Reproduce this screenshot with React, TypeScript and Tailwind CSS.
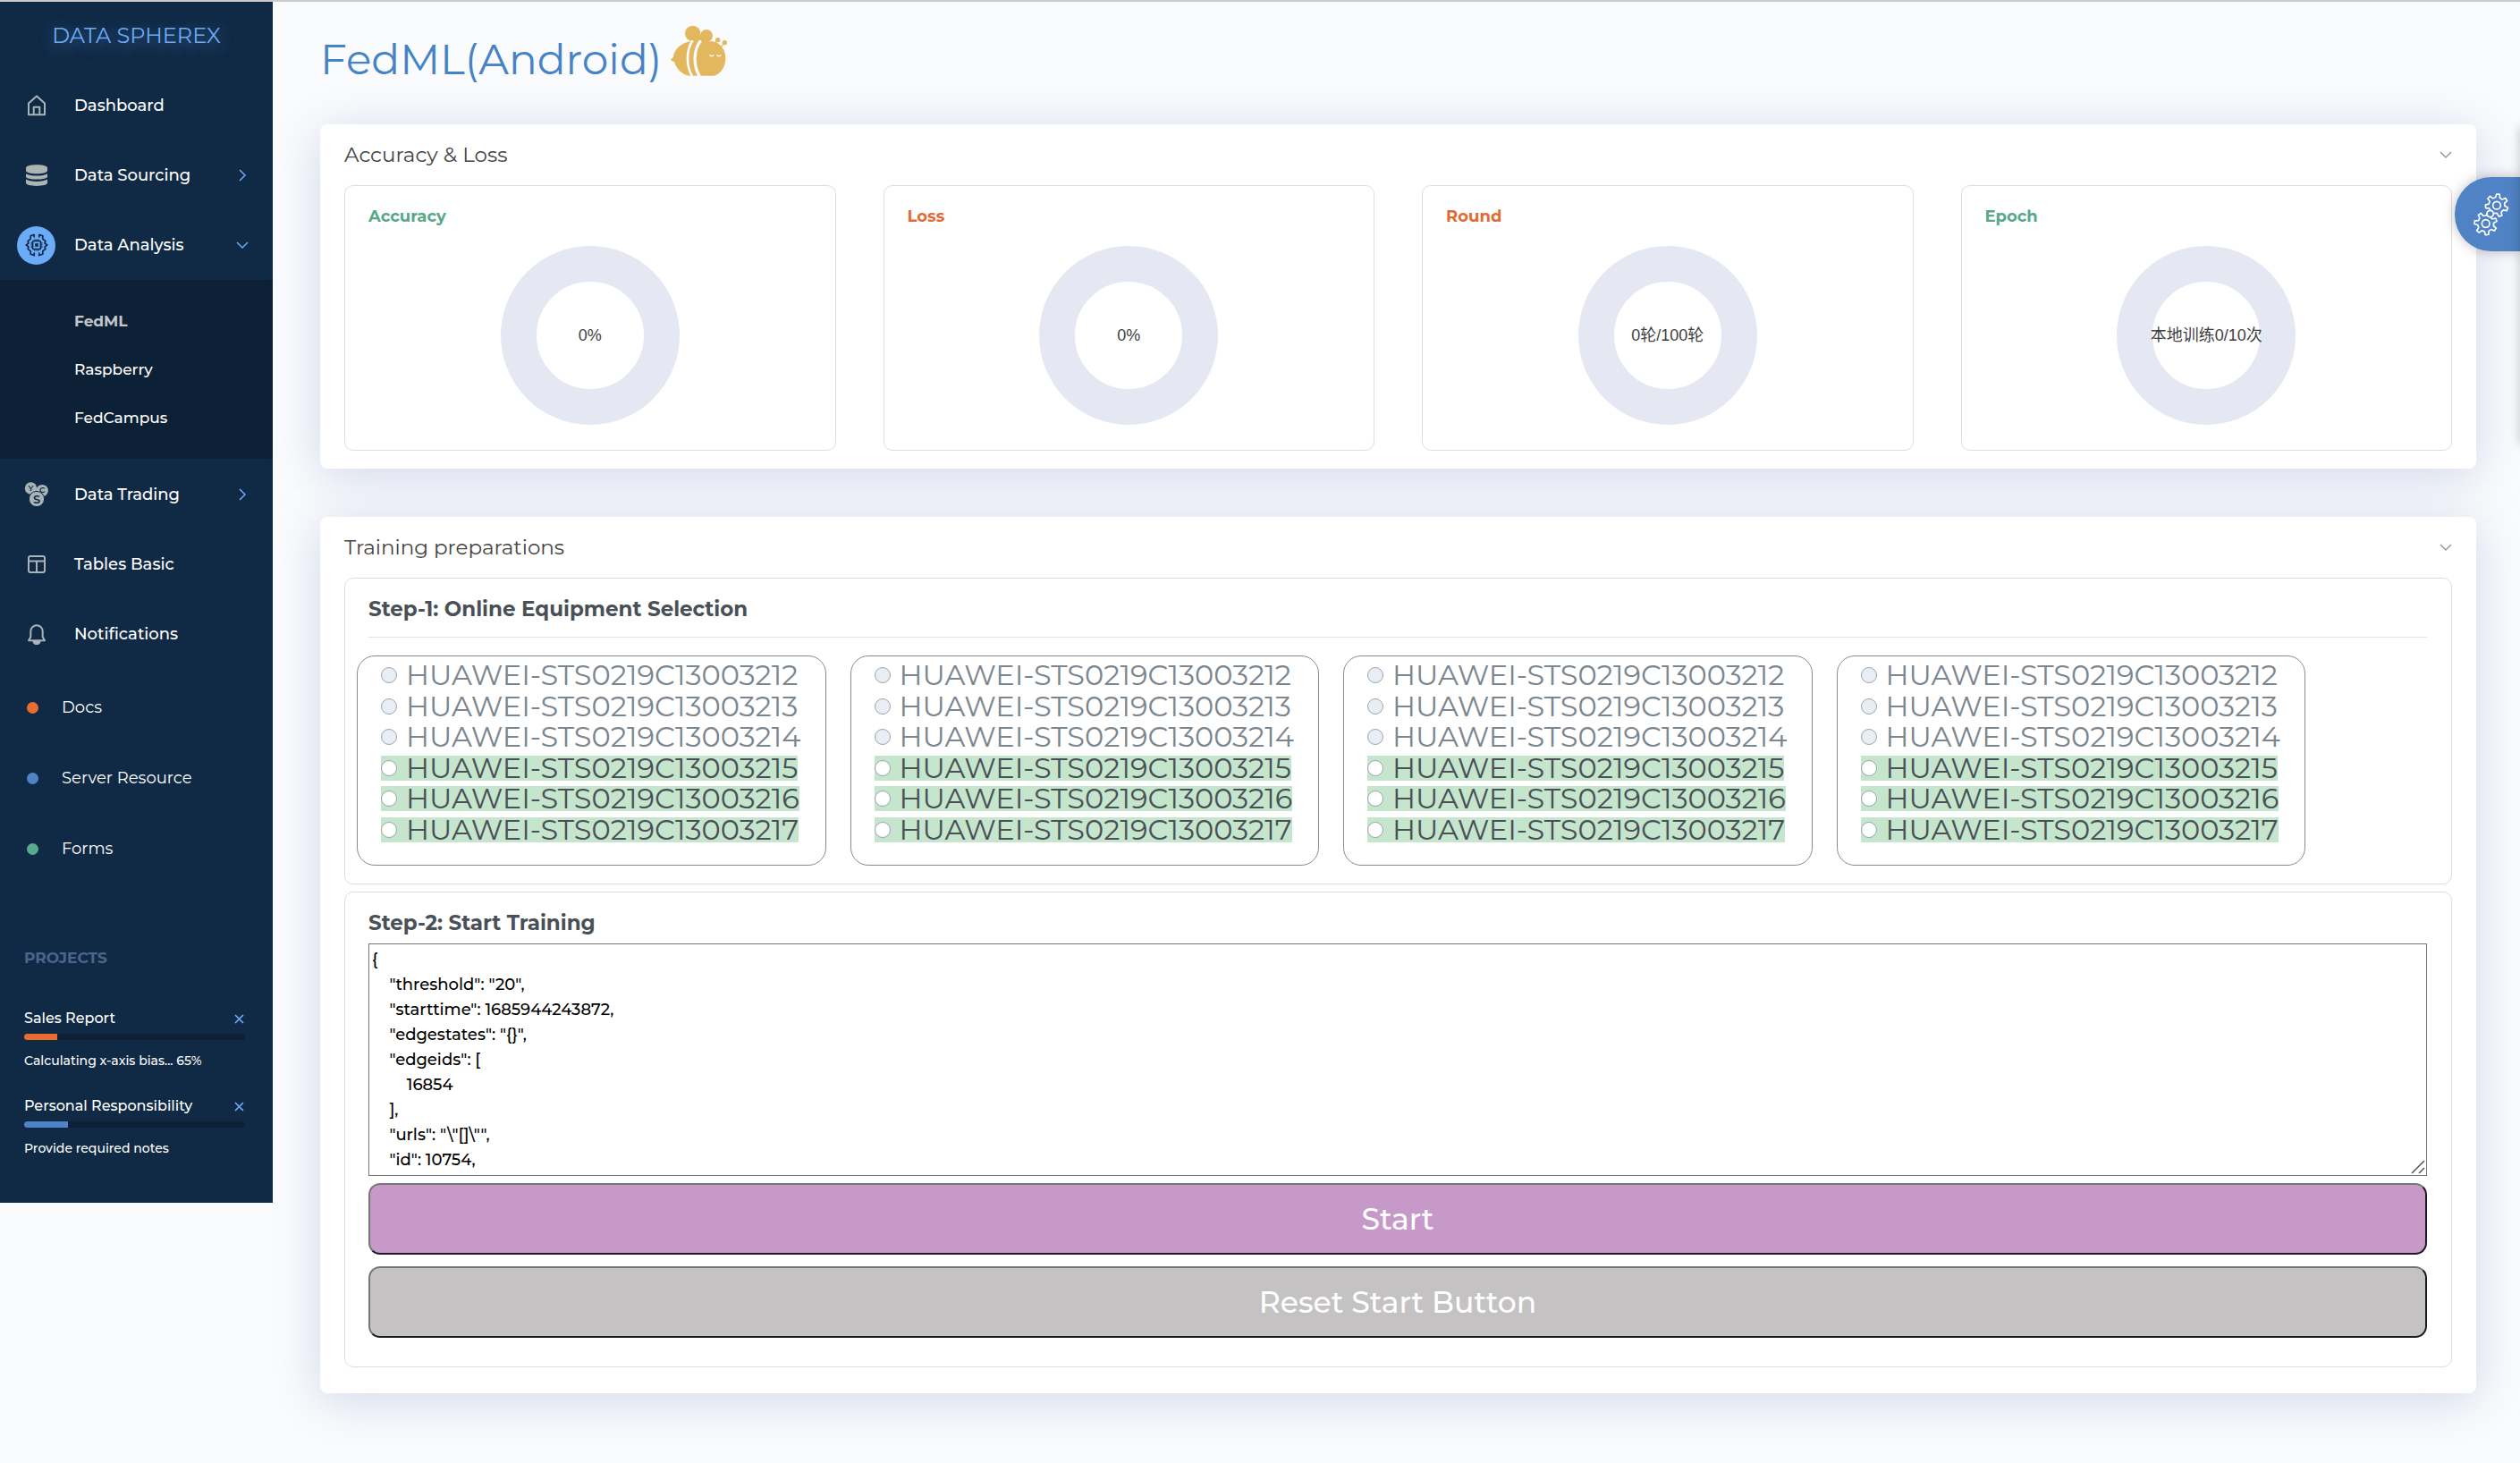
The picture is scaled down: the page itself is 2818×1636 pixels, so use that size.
import type { ReactNode } from 'react'

const ICON = '#a9b4b8'

function HomeIcon() {
  return (
    <svg width="24" height="24" viewBox="0 0 24 24" fill="none" stroke={ICON} strokeWidth="2" strokeLinejoin="round">
      <path d="M3 9.5 12 1.5l9 8V22.2H3z" />
      <path d="M8.7 22v-8.2h6.6V22" />
    </svg>
  )
}

function DatabaseIcon() {
  return (
    <svg width="24" height="24" viewBox="0 0 24 24" fill="#acb5b3">
      <path d="M0 3.6C0 1.500 4.800 .2 12 .2s12 1.300 12 3.400v3.200c0 2.100-4.800 3.500-12 3.500S0 8.900 0 6.800z" />
      <path d="M0 10.200c2.300 1.700 6.800 2.400 12 2.400s9.700-.7 12-2.400v3.200c0 1.900-4.800 3.100-12 3.100S0 15.300 0 13.400z" />
      <path d="M0 16.600c2.300 1.700 6.800 2.400 12 2.400s9.700-.7 12-2.400v4c0 2-4.800 3.300-12 3.300S0 22.600 0 20.600z" />
    </svg>
  )
}

function AnalysisIcon() {
  return (
    <span className="flex size-[43px] items-center justify-center rounded-full bg-[#6cabf8]">
      <svg width="26" height="26" viewBox="0 0 26 26" fill="none" stroke="#102a45" strokeWidth="1.700">
        <path d="M10.200 1.400 6.200 2.800v3.400l-3 2.300.7 2.500L1.400 13l2.500 2-.7 2.500 3 2.300v3.400l4 1.400v-3" />
        <path d="M15.800 1.400l4 1.400v3.400l3 2.300-.7 2.500 2.500 2-2.500 2 .7 2.500-3 2.300v3.400l-4 1.400v-3" />
        <path d="M10.200 1v3.500M15.800 1v3.500" />
        <rect x="8.500" y="8.500" width="9" height="9" rx="1" />
        <rect x="11.200" y="11.200" width="3.600" height="3.600" fill="#102a45" stroke="none" />
        <path strokeWidth="1.200" d="M10.800 6.500v2M13 6.500v2M15.200 6.500v2M10.800 17.500v2M13 17.500v2M15.200 17.500v2M6.500 10.800h2M6.500 13h2M6.500 15.200h2M17.500 10.800h2M17.500 13h2M17.500 15.200h2" />
      </svg>
    </span>
  )
}

function CoinsIcon() {
  return (
    <svg width="28" height="28" viewBox="0 0 28 28" fontFamily="Montserrat, Inter, sans-serif" fontWeight="600" textAnchor="middle">
      <circle cx="7.500" cy="7" r="6.700" fill={ICON} />
      <text x="7.500" y="10" fontSize="9" fill="#102a45">Y</text>
      <circle cx="20.200" cy="9.600" r="6.700" fill={ICON} />
      <text x="20.200" y="12" fontSize="9" fill="#102a45">C</text>
      <circle cx="14" cy="19" r="8.600" fill={ICON} stroke="#102a45" strokeWidth="1" />
      <text x="14" y="23.500" fontSize="13" fill="#102a45">S</text>
    </svg>
  )
}

function TableIcon() {
  return (
    <svg width="22" height="22" viewBox="0 0 22 22" fill="none" stroke={ICON} strokeWidth="2">
      <rect x="2" y="2" width="18" height="18" rx="2" />
      <path d="M2 7.500h18M11 7.500V20" />
    </svg>
  )
}

function BellIcon() {
  return (
    <svg width="24" height="24" viewBox="0 0 24 24" fill="none" stroke={ICON} strokeWidth="2" strokeLinejoin="round">
      <path d="M3 19.200h18l-2.300-4V9A6.700 6.700 0 0 0 5.300 9v6.200z" />
      <path d="M8.500 20a3.500 3.300 0 0 0 7 0" fill={ICON} />
    </svg>
  )
}

function Chevron({ down, className }: { down?: boolean; className: string }) {
  return down ? (
    <svg className={className} width="14" height="9" viewBox="0 0 14 9" fill="none" stroke="currentColor" strokeWidth="1.500">
      <path d="M1 1l6 6 6-6" />
    </svg>
  ) : (
    <svg className={className} width="9" height="14" viewBox="0 0 9 14" fill="none" stroke="currentColor" strokeWidth="1.500">
      <path d="M1 1l6 6-6 6" />
    </svg>
  )
}

function Bee() {
  return (
    <svg width="63" height="58" viewBox="18 24 189 174" fill="#e3b75d" aria-label="bee" role="img">
      <circle cx="92" cy="52" r="26" />
      <circle cx="138" cy="60" r="21" />
      <path d="M92 50l46 12-10 22H90z" />
      <path d="M85 79h76c24 6 41 28 41 56 0 32-18 53-38 59H78c-25-6-42-25-48-46l-13-7 10-10c2-25 26-47 58-52z" />
      <g fill="none" stroke="#fafbfd">
        <path d="M92 76c-22 30-23 85-2 120" strokeWidth="8" />
        <path d="M119 76c-25 30-26 85-4 120" strokeWidth="10" />
        <path d="M149 124a7 7 0 0 0 13 0M173 124a7 7 0 0 0 13 0" strokeWidth="4" />
      </g>
      <circle cx="176" cy="74" r="8" />
      <circle cx="199" cy="83" r="8" />
      <path d="M172 78l-6 14M197 86l-11 12" stroke="#e3b75d" strokeWidth="4" />
    </svg>
  )
}

function gearPath(cx: number, cy: number, turn: number) {
  const teeth = 7
  const step = (Math.PI * 2) / teeth
  const points: string[] = []
  for (let i = 0; i < teeth; i++) {
    const a = turn + i * step
    const corners: [number, number][] = [
      [-0.3, 27],
      [-0.16, 38],
      [0.16, 38],
      [0.3, 27],
    ]
    corners.forEach(([k, r]) => {
      const t = a + k * step
      points.push(`${(cx + r * Math.cos(t)).toFixed(1)} ${(cy + r * Math.sin(t)).toFixed(1)}`)
    })
  }
  return `M${points.join('L')}Z`
}

function GearsIcon() {
  return (
    <svg width="42" height="50" viewBox="90 72 126 150" fill="none" stroke="#fff" strokeWidth="5" strokeLinejoin="round">
      <path d={gearPath(171, 116, -1.45)} />
      <circle cx="171" cy="116" r="13" />
      <path d={gearPath(134, 177, 1.45)} />
      <circle cx="134" cy="177" r="13" />
      <circle cx="149" cy="144" r="11" fill="#5083c5" />
    </svg>
  )
}

function NavItem({ icon, label, arrow }: { icon: ReactNode; label: string; arrow?: 'right' | 'down' }) {
  return (
    <a href="#" className="flex h-[78px] items-center pl-[19px] pr-[27px] text-[18px] font-medium text-white">
      <span className="flex w-[43px] justify-center">{icon}</span>
      <span className="ml-[21px] flex-1">{label}</span>
      <span className="flex w-[14px] justify-center">
        {arrow && <Chevron down={arrow === 'down'} className="text-[#6cabf8]" />}
      </span>
    </a>
  )
}

const dots = [
  { label: 'Docs', dot: 'bg-[#eb6c31]' },
  { label: 'Server Resource', dot: 'bg-[#5083c5]' },
  { label: 'Forms', dot: 'bg-[#58ab8d]' },
]

const projects = [
  { name: 'Sales Report', note: 'Calculating x-axis bias... 65%', value: 15, bar: 'bg-[#eb6c31]' },
  { name: 'Personal Responsibility', note: 'Provide required notes', value: 20, bar: 'bg-[#5083c5]' },
]

function Sidebar() {
  return (
    <nav className="w-[305px] shrink-0 bg-[#102a45] pb-[50px]">
      <a href="#" className="flex h-[77px] justify-center pt-[21px] text-[24px] leading-[34px] text-[#6fa8f5] [text-shadow:0_4px_16px_#3f73b0]">
        DATA SPHEREX
      </a>
      <NavItem icon={<HomeIcon />} label="Dashboard" />
      <NavItem icon={<DatabaseIcon />} label="Data Sourcing" arrow="right" />
      <NavItem icon={<AnalysisIcon />} label="Data Analysis" arrow="down" />
      <div className="flex flex-col bg-[#0d2136] py-[19px] pl-[83px] text-[17px] font-medium leading-[54px] text-white">
        <a href="#" className="font-bold text-[#c3c5c9]">FedML</a>
        <a href="#">Raspberry</a>
        <a href="#">FedCampus</a>
      </div>
      <div className="pt-px">
        <NavItem icon={<CoinsIcon />} label="Data Trading" arrow="right" />
        <NavItem icon={<TableIcon />} label="Tables Basic" />
        <NavItem icon={<BellIcon />} label="Notifications" />
      </div>
      <div className="pt-1">
        {dots.map((d) => (
          <a key={d.label} href="#" className="flex h-[79px] items-center pl-[30px] text-[18px] text-white">
            <span className={`size-[13px] rounded-full ${d.dot}`} />
            <span className="ml-[26px]">{d.label}</span>
          </a>
        ))}
      </div>
      <div className="px-[27px] pt-[70px]">
        <h5 className="text-[17px] font-bold leading-6 text-[#4a668d]">PROJECTS</h5>
        {projects.map((p, i) => (
          <div key={p.name} className={i === 0 ? 'mt-[44px]' : 'mt-[28px]'}>
            <div className="flex items-center justify-between pr-[5px] text-white">
              <span className="text-[16px] font-medium leading-6">{p.name}</span>
              <button aria-label={`Dismiss ${p.name}`} className="text-[#6cabf8]">
                <svg width="11" height="11" viewBox="0 0 11 11" stroke="currentColor" strokeWidth="1.700">
                  <path d="M1 1l9 9M10 1l-9 9" />
                </svg>
              </button>
            </div>
            <div className="mr-1 mt-[5px] h-[7px] overflow-hidden rounded bg-[#0d2136]">
              <div className={`h-full ${p.bar}`} style={{ width: `${p.value}%` }} />
            </div>
            <p className="mt-3 text-[14px] font-medium leading-[22px] text-white">{p.note}</p>
          </div>
        ))}
      </div>
    </nav>
  )
}

function Card({ title, className, children }: { title: string; className: string; children: ReactNode }) {
  return (
    <section className={`rounded-[8px] bg-white px-[27px] shadow-[0_8px_54px_rgba(150,166,208,0.4)] ${className}`}>
      <header className="flex h-[68px] items-center justify-between">
        <h2 className="text-[23px] text-[#444]">{title}</h2>
        <button aria-label={`Collapse ${title}`}>
          <Chevron down className="text-[#999]" />
        </button>
      </header>
      {children}
    </section>
  )
}

const gauges = [
  { title: 'Accuracy', text: '0%', color: 'text-[#58a88a]' },
  { title: 'Loss', text: '0%', color: 'text-[#e06c35]' },
  { title: 'Round', text: '0轮/100轮', color: 'text-[#e06c35]' },
  { title: 'Epoch', text: '本地训练0/10次', color: 'text-[#58a88a]' },
]

function Gauge({ title, text, color }: { title: string; text: string; color: string }) {
  return (
    <div className="rounded-[10px] border border-[#d9dfdf] px-[26px] pb-7 pt-5">
      <h3 className={`text-[18px] font-bold leading-7 ${color}`}>{title}</h3>
      <div className="mx-auto mt-[19px] flex size-[200px] items-center justify-center rounded-full border-[40px] border-[#e5e8f2]">
        <span className="whitespace-nowrap font-['Liberation_Sans','Noto_Sans_CJK_SC',sans-serif] text-[18px] text-[#3f3f3f]">{text}</span>
      </div>
    </div>
  )
}

const devices = [212, 213, 214, 215, 216, 217].map((n) => ({ name: `HUAWEI-STS0219C13003${n}`, online: n > 214 }))

function DeviceGroup({ index }: { index: number }) {
  return (
    <fieldset className="rounded-[20px] border border-[#8a8a8a] px-[26px] pb-[22px] pt-1">
      <div className="grid h-[207px] auto-rows-fr justify-start">
        {devices.map((d) => (
          <div key={d.name} className="flex items-center">
            <label
              className={`flex h-7 items-center whitespace-nowrap text-[32px] ${
                d.online ? 'bg-[#c5e5cc] text-[#495057]' : 'text-[#7b868f]'
              }`}
            >
              <input
                type="radio"
                name={`device-${index}`}
                value={d.name}
                disabled={!d.online}
                className="mr-[10px] size-[18px] appearance-none rounded-full border border-[#9aa5ad] bg-white checked:bg-[#5083c5] disabled:bg-[#e9eef4]"
              />
              {d.name}
            </label>
          </div>
        ))}
      </div>
    </fieldset>
  )
}

const config = `{
    "threshold": "20",
    "starttime": 1685944243872,
    "edgestates": "{}",
    "edgeids": [
        16854
    ],
    "urls": "\\"[]\\"",
    "id": 10754,`

export default function App() {
  return (
    <div className="relative flex min-h-screen items-start overflow-hidden border-t-2 border-[#cbcbcd] bg-[#fafbfd] font-['Montserrat','Inter','Noto_Sans_CJK_SC',sans-serif]">
      <Sidebar />
      <main className="min-w-0 flex-1 pb-[76px] pl-[53px] pr-[49px]">
        <h1 className="flex h-[137px] items-start pt-[26px] text-[47px] leading-[78px] text-[#4683c6]">
          FedML(Android)
          <span className="ml-[10px]">
            <Bee />
          </span>
        </h1>

        <Card title="Accuracy & Loss" className="pb-5">
          <div className="grid grid-cols-4 gap-[53px]">
            {gauges.map((g) => (
              <Gauge key={g.title} {...g} />
            ))}
          </div>
        </Card>

        <Card title="Training preparations" className="mt-[54px] pb-[29px]">
          <div className="rounded-[10px] border border-[#d9dfdf] pb-5 pt-[17px]">
            <h3 className="px-[26px] text-[23px] font-bold leading-[34px] text-[#495057]">Step-1: Online Equipment Selection</h3>
            <hr className="ml-[26px] mr-[27px] mt-[14px] border-[#dfe3e3]" />
            <div className="ml-[13px] mr-[163px] mt-5 grid grid-cols-4 gap-[27px]">
              {[1, 2, 3, 4].map((n) => (
                <DeviceGroup key={n} index={n} />
              ))}
            </div>
          </div>

          <div className="mt-2 rounded-[10px] border border-[#d9dfdf] pb-8 pl-[26px] pr-[27px] pt-[17px]">
            <h3 id="step-2" className="text-[23px] font-bold leading-[34px] text-[#495057]">
              Step-2: Start Training
            </h3>
            <div className="relative mt-[6px]">
              <textarea
                aria-labelledby="step-2"
                defaultValue={config}
                spellCheck={false}
                className="block h-[260px] w-full resize-none border border-[#767676] bg-white px-[3px] pb-0 pt-[3px] text-[18px] font-medium leading-7 text-black"
              />
              <svg className="pointer-events-none absolute bottom-[2px] right-[2px]" width="16" height="16" viewBox="0 0 16 16" stroke="#555" strokeWidth="1.500">
                <path d="M1 15 15 1M9 15l6-6" />
              </svg>
            </div>
            <button className="mt-2 block h-20 w-full rounded-[13px] border-2 border-b-[#22182a] border-l-[#777] border-r-[#22182a] border-t-[#777] bg-[#c699c8] pt-[2px] text-[33px] font-medium text-white">
              Start
            </button>
            <button className="mt-[13px] block h-20 w-full rounded-[13px] border-2 border-b-[#1d1d20] border-l-[#777] border-r-[#1d1d20] border-t-[#777] bg-[#c4c2c3] pt-[2px] text-[33px] font-medium text-white">
              Reset Start Button
            </button>
          </div>
        </Card>
      </main>

      <button
        aria-label="Settings"
        className="absolute right-0 top-[196px] flex h-[83px] w-[73px] items-center justify-center rounded-l-[41px] bg-[#5083c5] pl-2 shadow-[0_0_14px_rgba(0,0,0,0.25)]"
      >
        <GearsIcon />
      </button>
      <div className="absolute -right-2 top-[140px] h-[354px] w-2 shadow-[0_0_12px_rgba(0,0,0,0.25)]" />
    </div>
  )
}
